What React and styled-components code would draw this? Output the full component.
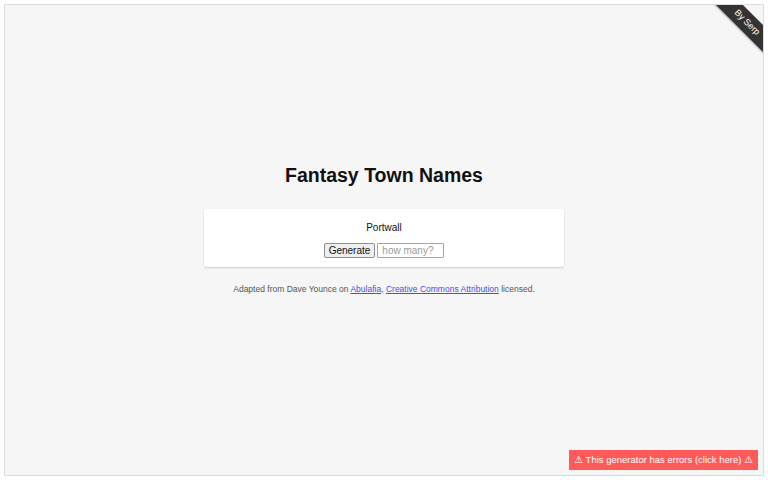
import React from 'react';
import styled, { createGlobalStyle } from 'styled-components';

const Global = createGlobalStyle`
    html, body{
        margin:0;
        padding:0;
        background:#ffffff;
        font-family:"Liberation Sans", Arial, sans-serif;
    }
`

const App = () => {
    const [name] = React.useState('Portwall');

    return (
        <>
            <Global />
            <Page>
                <Frame>
                    <Ribbon>By Serp</Ribbon>
                    <Title>Fantasy Town Names</Title>
                    <Card>
                        <Result>{name}</Result>
                        <Controls>
                            <GenButton>Generate</GenButton>
                            <Count placeholder="how many?" />
                        </Controls>
                    </Card>
                    <Credits>
                        Adapted from Dave Younce on <a href="#">Abulafia</a>, <a href="#">Creative Commons Attribution</a> licensed.
                    </Credits>
                </Frame>
                <ErrorBar>⚠ This generator has errors (click here) ⚠</ErrorBar>
            </Page>
        </>
    );
};

export default App;

const Page = styled.div`
    position:relative;
    padding:4px;
    height:480px;
    box-sizing:border-box;
`

const Frame = styled.div`
    position:relative;
    overflow:hidden;
    height:472px;
    box-sizing:border-box;
    border:1px solid #dcdcdc;
    background:#f6f6f6;
    display:flex;
    flex-direction:column;
    align-items:center;
    padding-top:158px;
`

const Ribbon = styled.div`
    position:absolute;
    top:8px;
    right:-36px;
    width:104px;
    height:19px;
    line-height:19px;
    background:#333333;
    color:#ffffff;
    font-size:9px;
    text-align:center;
    transform:rotate(45deg);
    box-shadow:0 1px 2px rgba(0,0,0,0.3);
`

const Title = styled.h1`
    margin:0;
    font-size:19.5px;
    font-weight:700;
    color:#111111;
    line-height:24px;
`

const Card = styled.div`
    margin-top:22px;
    width:360px;
    box-sizing:border-box;
    background:#ffffff;
    border-radius:2px;
    box-shadow:0 1px 2px rgba(0,0,0,0.18);
    padding:12px 0 9px;
    display:flex;
    flex-direction:column;
    align-items:center;
`

const Result = styled.div`
    font-size:10px;
    color:#111111;
    line-height:13px;
`

const Controls = styled.div`
    margin-top:9px;
    display:flex;
    align-items:center;
    gap:2px;
`

const GenButton = styled.button`
    font-family:"Liberation Sans", Arial, sans-serif;
    font-size:10px;
    height:15px;
    padding:0 4px;
    line-height:13px;
    border:1px solid #8f8f8f;
    border-radius:2px;
    background:#efefef;
    color:#111111;
`

const Count = styled.input`
    font-family:"Liberation Sans", Arial, sans-serif;
    font-size:10px;
    width:67px;
    height:15px;
    box-sizing:border-box;
    padding:0 4px;
    border:1px solid #a5a5a5;
    border-radius:1px;
    &::placeholder{
        color:#9a9a9a;
    }
`

const Credits = styled.p`
    margin:17px 0 0;
    font-size:8.5px;
    color:#555555;
    a{
        color:#4a4aee;
    }
`

const ErrorBar = styled.div`
    position:absolute;
    right:10px;
    bottom:10px;
    height:20px;
    line-height:20px;
    padding:0 5px;
    background:#ff5a5a;
    color:#ffffff;
    font-size:9.5px;
`
